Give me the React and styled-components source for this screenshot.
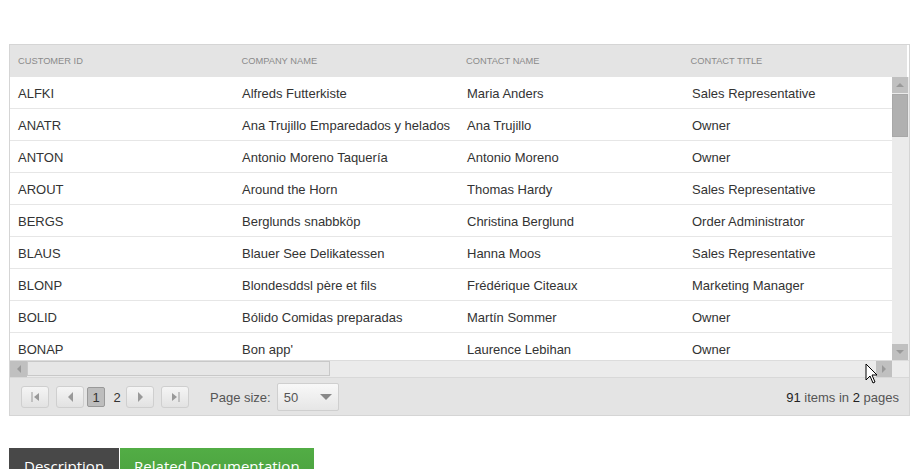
import styled, { createGlobalStyle } from 'styled-components';

const GlobalStyle = createGlobalStyle`
  html, body { margin: 0; padding: 0; background: #fff; }
  body { font-family: "Liberation Sans", Arial, sans-serif; }
`;

const customers = [
  ['ALFKI', 'Alfreds Futterkiste', 'Maria Anders', 'Sales Representative'],
  ['ANATR', 'Ana Trujillo Emparedados y helados', 'Ana Trujillo', 'Owner'],
  ['ANTON', 'Antonio Moreno Taquería', 'Antonio Moreno', 'Owner'],
  ['AROUT', 'Around the Horn', 'Thomas Hardy', 'Sales Representative'],
  ['BERGS', 'Berglunds snabbköp', 'Christina Berglund', 'Order Administrator'],
  ['BLAUS', 'Blauer See Delikatessen', 'Hanna Moos', 'Sales Representative'],
  ['BLONP', 'Blondesddsl père et fils', 'Frédérique Citeaux', 'Marketing Manager'],
  ['BOLID', 'Bólido Comidas preparadas', 'Martín Sommer', 'Owner'],
  ['BONAP', "Bon app'", 'Laurence Lebihan', 'Owner'],
];

const columns = ['Customer ID', 'Company Name', 'Contact Name', 'Contact Title'];
const widths = [224, 225, 225, 225];

const Page = styled.div`
  padding: 44px 11px 0 9px;
`;

const Grid = styled.div`
  position: relative;
  border: 1px solid #d5d5d5;
  background: #fff;
`;

const HeaderRow = styled.div`
  display: flex;
  height: 32px;
  background: #e4e4e4;
`;

const HeaderCell = styled.div`
  width: ${({ $w }) => $w}px;
  padding: 0 0 1px 8px;
  box-sizing: border-box;
  display: flex;
  align-items: center;
  font-size: 9.3px;
  color: #8a8a8a;
  text-transform: uppercase;
`;

const HeaderSpacer = styled.div`
  flex: 1;
  border-left: 2px solid #fff;
`;

const BodyArea = styled.div`
  display: flex;
  height: 283px;
  overflow: hidden;
`;

const Rows = styled.div`
  flex: 1;
  overflow: hidden;
`;

const Row = styled.div`
  display: flex;
  height: 32px;
  border-bottom: 1px solid #e6e6e6;
  box-sizing: border-box;
`;

const Cell = styled.div`
  width: ${({ $w }) => $w}px;
  flex-shrink: 0;
  padding: 2px 0 0 8px;
  box-sizing: border-box;
  display: flex;
  align-items: center;
  font-size: 13px;
  color: #333;
  white-space: nowrap;
`;

const VScroll = styled.div`
  width: 17px;
  background: #ebebeb;
  display: flex;
  flex-direction: column;
`;

const ScrollButton = styled.div`
  width: ${({ $w }) => $w || 16}px;
  height: 16px;
  background: #c0c0c0;
  display: flex;
  align-items: center;
  justify-content: center;
  flex-shrink: 0;
`;

const VThumb = styled.div`
  height: 43px;
  width: 16px;
  margin-top: 1px;
  background: #b0b0b0;
  border: 1px solid #a8a8a8;
  box-sizing: border-box;
`;

const Filler = styled.div`
  flex: 1;
`;

const HScrollRow = styled.div`
  display: flex;
  height: 16px;
  background: #ebebeb;
  border-top: 1px solid #dcdcdc;
`;

const HThumb = styled.div`
  width: 303px;
  height: 15px;
  background: #e6e6e6;
  border: 1px solid #c8c8c8;
  box-sizing: border-box;
`;

const Corner = styled.div`
  width: 17px;
  background: #ececec;
`;

const Pager = styled.div`
  display: flex;
  align-items: center;
  height: 38px;
  background: #e4e4e4;
  border-top: 1px solid #d8d8d8;
  padding: 1px 10px 0 11px;
  box-sizing: border-box;
  font-size: 13px;
  color: #555;
`;

const PagerButton = styled.div`
  width: 28px;
  height: 22px;
  box-sizing: border-box;
  border: 1px solid #cfcfcf;
  border-radius: 3px;
  background: linear-gradient(#f5f5f5, #e2e2e2);
  display: flex;
  align-items: center;
  justify-content: center;
  margin-right: ${({ $mr }) => $mr || 0}px;
`;

const PageNumber = styled.div`
  height: 20px;
  width: 18px;
  box-sizing: border-box;
  display: flex;
  align-items: center;
  justify-content: center;
  font-size: 13px;
  color: #333;
  border-radius: 2px;
  margin-right: ${({ $mr }) => $mr || 0}px;
  border: 1px solid transparent;
  ${({ $active }) => $active && `
    background: #bdbdbd;
    border-color: #999;
  `}
`;

const SizeLabel = styled.span`
  margin-left: 21px;
  margin-right: 6px;
  color: #555;
`;

const SizeSelect = styled.div`
  width: 62px;
  height: 28px;
  box-sizing: border-box;
  border: 1px solid #cfcfcf;
  border-radius: 2px;
  background: linear-gradient(#f8f8f8, #e6e6e6);
  display: flex;
  align-items: center;
  justify-content: space-between;
  padding: 0 6px;
  color: #555;
`;

const PagerInfo = styled.div`
  margin-left: auto;
  color: #555;
  b { font-weight: normal; color: #222; }
`;

const Tabs = styled.div`
  display: flex;
  gap: 1px;
  margin-top: 32px;
  height: 21px;
  overflow: hidden;
`;

const Tab = styled.div`
  background: ${({ $green }) => ($green ? 'linear-gradient(#52ad45, #4a9f3e)' : '#484848')};
  color: #fff;
  font-family: "Open Sans", sans-serif;
  font-size: 15px;
  padding: 8px ${({ $green }) => ($green ? 14 : 15)}px 0;
  height: 40px;
  box-sizing: border-box;
  white-space: nowrap;
`;

const Cursor = styled.svg`
  position: absolute;
  left: 855px;
  top: 318px;
`;

const Tri = ({ dir, color = '#888', size = 4 }) => {
  const pts = {
    up: `0,${size} ${size},0 ${size * 2},${size}`,
    down: `0,0 ${size * 2},0 ${size},${size}`,
    left: `${size},0 ${size},${size * 2} 0,${size}`,
    right: `0,0 0,${size * 2} ${size},${size}`,
  }[dir];
  const vertical = dir === 'up' || dir === 'down';
  return (
    <svg width={vertical ? size * 2 : size} height={vertical ? size : size * 2}>
      <polygon points={pts} fill={color} />
    </svg>
  );
};

const EdgeIcon = ({ dir }) => (
  <svg width="9" height="10" viewBox="0 0 9 10">
    {dir === 'first' ? (
      <>
        <rect x="0.5" y="0" width="1" height="10" fill="#999" />
        <polygon points="8,1 8,9 3,5" fill="#999" />
      </>
    ) : (
      <>
        <polygon points="1,1 1,9 6,5" fill="#999" />
        <rect x="7.5" y="0" width="1" height="10" fill="#999" />
      </>
    )}
  </svg>
);

export default function App() {
  return (
    <>
      <GlobalStyle />
      <Page>
        <Grid>
          <HeaderRow>
            {columns.map((c, i) => <HeaderCell key={c} $w={widths[i]}>{c}</HeaderCell>)}
            <HeaderSpacer />
          </HeaderRow>
          <BodyArea>
            <Rows>
              {customers.map(r => (
                <Row key={r[0]}>
                  {r.map((v, i) => <Cell key={i} $w={widths[i]}>{v}</Cell>)}
                </Row>
              ))}
            </Rows>
            <VScroll>
              <ScrollButton><Tri dir="up" color="#999" /></ScrollButton>
              <VThumb />
              <Filler />
              <ScrollButton><Tri dir="down" color="#999" /></ScrollButton>
            </VScroll>
          </BodyArea>
          <HScrollRow>
            <ScrollButton $w={17}><Tri dir="left" color="#999" /></ScrollButton>
            <HThumb />
            <Filler />
            <ScrollButton $w={16}><Tri dir="right" color="#999" /></ScrollButton>
            <Corner />
          </HScrollRow>
          <Pager>
            <PagerButton $mr={7}><EdgeIcon dir="first" /></PagerButton>
            <PagerButton $mr={3}><Tri dir="left" color="#999" size={5} /></PagerButton>
            <PageNumber $active $mr={3}>1</PageNumber>
            <PageNumber>2</PageNumber>
            <PagerButton $mr={7}><Tri dir="right" color="#999" size={5} /></PagerButton>
            <PagerButton><EdgeIcon dir="last" /></PagerButton>
            <SizeLabel>Page size:</SizeLabel>
            <SizeSelect>
              <span>50</span>
              <Tri dir="down" color="#888" size={6} />
            </SizeSelect>
            <PagerInfo><b>91</b> items in <b>2</b> pages</PagerInfo>
          </Pager>
          <Cursor width="14" height="22" viewBox="0 0 14 22">
            <path d="M1 1 L1 17 L5 13 L8 20 L10 19 L7 12 L12 12 Z" fill="#fff" stroke="#000" strokeWidth="1" strokeLinejoin="round" />
          </Cursor>
        </Grid>
        <Tabs>
          <Tab>Description</Tab>
          <Tab $green>Related Documentation</Tab>
        </Tabs>
      </Page>
    </>
  );
}
